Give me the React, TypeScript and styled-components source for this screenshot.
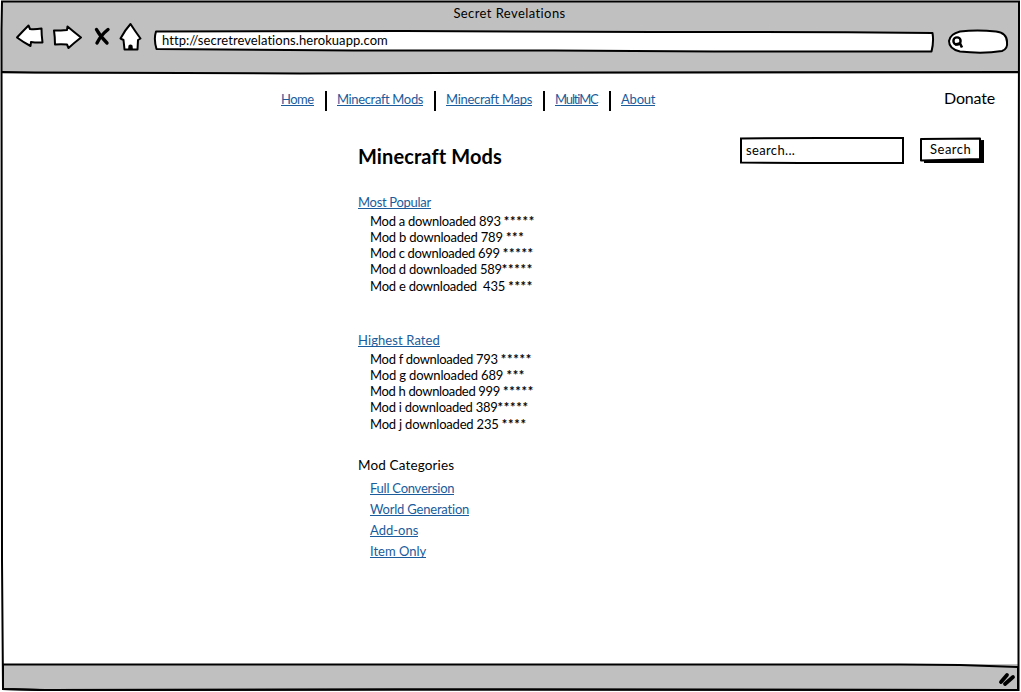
import React from "react";
import styled, { createGlobalStyle } from "styled-components";

const GlobalStyle = createGlobalStyle`
  * { box-sizing: border-box; }
  body { margin: 0; background: #fff; }
`;

const Window = styled.div`
  position: relative;
  display: flex;
  flex-direction: column;
  width: 1021px;
  height: 692px;
  overflow: hidden;
  background: #fff;
  color: #000;
  font-family: Lato, "Open Sans", sans-serif;
  font-size: 13px;
  font-variant-ligatures: none;
  line-height: 16px;
  white-space: pre;
`;

const FrameLines = styled.svg`
  position: absolute;
  inset: 0;
  pointer-events: none;
`;

const Chrome = styled.header`
  flex: none;
  height: 73px;
  margin: 1px 2px 0;
  padding-top: 4px;
  background: #c0c0c0;
`;

const Title = styled.div`
  height: 16px;
  padding-left: 15px;
  text-align: center;
  padding-right: 17px;
`;

const Toolbar = styled.div`
  display: flex;
  align-items: flex-start;
  padding-left: 13px;
`;

const ToolIcon = styled.svg<{ $gap: number }>`
  flex: none;
  display: block;
  margin-right: ${(p) => p.$gap}px;
`;

const Field = styled.div<{ $w: number; $h: number; $top?: number; $left?: number; $pad: number }>`
  position: relative;
  flex: none;
  display: flex;
  align-items: center;
  width: ${(p) => p.$w}px;
  height: ${(p) => p.$h}px;
  margin-top: ${(p) => p.$top ?? 0}px;
  margin-left: ${(p) => p.$left ?? 0}px;
  padding-left: ${(p) => p.$pad}px;
  padding-bottom: 2px;
`;

const Sketch = styled.svg`
  position: absolute;
  inset: 0;
  overflow: visible;
`;

const Label = styled.span<{ $ls?: number }>`
  position: relative;
  letter-spacing: ${(p) => p.$ls ?? 0}px;
`;

const Stars = styled.span`
  font-weight: 700;
  letter-spacing: 0.7px;
`;

const Link = styled.a<{ $ls?: number }>`
  display: block;
  width: fit-content;
  height: 14px;
  line-height: 15px;
  color: #1a5c9c;
  border-bottom: 1px solid #1a5c9c;
  letter-spacing: ${(p) => p.$ls ?? 0}px;
`;

const TopRow = styled.div`
  display: flex;
  justify-content: space-between;
  height: 39px;
  padding: 17px 26px 0 281px;
`;

const Nav = styled.nav`
  display: flex;
`;

const NavItem = styled.div<{ $w: number }>`
  width: ${(p) => p.$w}px;
  height: 20px;
  padding-top: 1px;
  & + & {
    border-left: 2px solid #000;
    padding-left: 10px;
  }
`;

const Donate = styled.div`
  width: 51px;
  font-size: 16px;
  line-height: 14px;
`;

const HeadRow = styled.div`
  display: flex;
  height: 82px;
  padding: 24px 0 0 358px;
`;

const Heading = styled.h1`
  margin: 8px 0 0;
  width: 382px;
  font-size: 20px;
  line-height: 22px;
  font-weight: 700;
  letter-spacing: 0.1px;
`;

const Section = styled.section<{ $h: number }>`
  height: ${(p) => p.$h}px;
  padding-left: 358px;
`;

const ModList = styled.ul`
  list-style: none;
  margin: 4px 0 0;
  padding: 0 0 0 12px;
  line-height: 16px;
  li:last-child {
    margin-top: 1px;
  }
`;

const SectionTitle = styled.div`
  height: 26px;
  line-height: 20px;
  font-size: 13.5px;
`;

const Categories = styled.div`
  display: flex;
  flex-direction: column;
  gap: 7px;
  padding-left: 12px;
`;

const StatusBar = styled.footer`
  flex: none;
  height: 27px;
  margin: auto 2px 1px;
  background: #c0c0c0;
`;

const nav: [string, number, number][] = [
  ["Home", 44, -0.5],
  ["Minecraft Mods", 109, -0.36],
  ["Minecraft Maps", 109, -0.3],
  ["MultiMC", 66, -1.15],
  ["About", 60, -0.2],
];

interface Mod {
  text: string;
  stars: string;
  ls: number;
}

const popular: Mod[] = [
  { text: "Mod a downloaded 893 ", stars: "*****", ls: -0.26 },
  { text: "Mod b downloaded 789 ", stars: "***", ls: -0.2 },
  { text: "Mod c downloaded 699 ", stars: "*****", ls: -0.3 },
  { text: "Mod d downloaded 589", stars: "*****", ls: -0.25 },
  { text: "Mod e downloaded  435 ", stars: "****", ls: -0.22 },
];

const rated: Mod[] = [
  { text: "Mod f downloaded 793 ", stars: "*****", ls: -0.3 },
  { text: "Mod g downloaded 689 ", stars: "***", ls: -0.15 },
  { text: "Mod h downloaded 999 ", stars: "*****", ls: -0.34 },
  { text: "Mod i downloaded 389", stars: "*****", ls: -0.25 },
  { text: "Mod j downloaded 235 ", stars: "****", ls: -0.2 },
];

const categories: [string, number][] = [
  ["Full Conversion", -0.25],
  ["World Generation", -0.2],
  ["Add-ons", 0],
  ["Item Only", 0],
];

const Mods = ({ items }: { items: Mod[] }) => (
  <ModList>
    {items.map(({ text, stars, ls }) => (
      <li key={text}>
        <Label $ls={ls}>{text}</Label>
        <Stars>{stars}</Stars>
      </li>
    ))}
  </ModList>
);

const ink = { fill: "#fff", stroke: "#000", strokeWidth: 2, strokeLinejoin: "round" as const, strokeLinecap: "round" as const };

export default function App() {
  return (
    <>
      <GlobalStyle />
      <Window>
        <Chrome>
          <Title><Label $ls={0.42}>Secret Revelations</Label></Title>
          <Toolbar>
            <ToolIcon $gap={8} width="30" height="32">
              <path {...ink} d="M2 16.5Q8 10 13.5 4.5L15 8Q20 8.500 26.500 7.500Q26.500 14 27.500 21.500Q21 21.800 16 21L15.500 25Q8 21 2 16.500Z" />
            </ToolIcon>
            <ToolIcon $gap={9} width="31" height="32">
              <path {...ink} d="M1 9.500Q8 9.500 14 9L14.500 5.500Q21 11 28 16.500Q21 22 15.500 27L14 23.500Q8 23 2 23.500Q2 16 1 9.500Z" />
            </ToolIcon>
            <ToolIcon $gap={8} width="18" height="32">
              <path d="M3.500 8.500Q7 15 14 22M15 8.500Q8 14 4 22" fill="none" stroke="#000" strokeWidth="3.400" strokeLinecap="round" />
            </ToolIcon>
            <ToolIcon $gap={11} width="24" height="32">
              <path {...ink} d="M11.500 3Q16 10 21.500 17.500L19 19L18.500 28.500L5.500 28.500L4.500 19L1.500 17.500Q6 9 11.500 3Z" />
              <path d="M9 29L9.500 24.500Q11.500 22.500 13.500 24.500L14 29Z" fill="#000" />
            </ToolIcon>
            <Field $w={780} $h={22} $top={9} $pad={8}>
              <Sketch width="780" height="22">
                <path {...ink} d="M2 1.500L250 1L500 2Q640 1.500 778.500 3Q780 12 777.500 21.500L560 21.500L400 20.500L200 20.500L2.500 19Q-.5 9 2 1.500Z" />
              </Sketch>
              <Label $ls={0.07}>http://secretrevelations.herokuapp.com</Label>
            </Field>
            <Field $w={60} $h={24} $top={8} $left={14} $pad={3}>
              <Sketch width="60" height="24">
                <path {...ink} d="M1 12Q2 5 12 2.500Q29 .5 48 2.500Q59 4 59 13Q60 20 54 22Q35 25 12 22.500Q1 20 1 12Z" />
                <circle cx="9" cy="12" r="3.600" fill="none" stroke="#000" strokeWidth="2.400" />
                <path d="M7 15.500L12 14.500L14 18.500" fill="none" stroke="#000" strokeWidth="2.600" />
              </Sketch>
            </Field>
          </Toolbar>
        </Chrome>

        <TopRow>
          <Nav>
            {nav.map(([text, w, ls]) => (
              <NavItem key={text} $w={w}><Link $ls={ls}>{text}</Link></NavItem>
            ))}
          </Nav>
          <Donate><Label $ls={-0.15}>Donate</Label></Donate>
        </TopRow>

        <HeadRow>
          <Heading>Minecraft Mods</Heading>
          <Field $w={164} $h={27} $pad={6}>
            <Sketch width="164" height="27">
              <path {...ink} strokeLinejoin="miter" d="M1 1.500L80 1L163 1L163 26L60 26L1 25.500Z" />
            </Sketch>
            <Label $ls={0.35}>search...</Label>
          </Field>
          <Field $w={65} $h={26} $left={16} $pad={10}>
            <Sketch width="65" height="26">
              <path d="M4 5L64 3L64 26L4 26Z" fill="#000" />
              <path {...ink} d="M1 2L60 1.500L60 22L1 23.500Z" />
            </Sketch>
            <Label $ls={0.5}>Search</Label>
          </Field>
        </HeadRow>

        <Section $h={138}>
          <Link $ls={-0.3}>Most Popular</Link>
          <Mods items={popular} />
        </Section>
        <Section $h={122}>
          <Link $ls={0.1}>Highest Rated</Link>
          <Mods items={rated} />
        </Section>
        <Section $h={120}>
          <SectionTitle><Label $ls={0.14}>Mod Categories</Label></SectionTitle>
          <Categories>
            {categories.map(([text, ls]) => <Link key={text} $ls={ls}>{text}</Link>)}
          </Categories>
        </Section>

        <StatusBar />
        <FrameLines width="1021" height="692" fill="none" stroke="#000" strokeWidth="2">
          <path d="M2 662L900 663.500L1019 667V692H2Z" fill="#fff" stroke="none" />
          <path d="M3 664.500L300 664.500L900 664.500L960 665L1018 667V690L400 689.500L40 690L3 689Z" fill="#c0c0c0" />
          <path d="M2 1.500L1019 1.500L1019 30L1018.500 300L1018.500 690L400 689.500L45 690L3 689L2 560L1.500 30Z" />
          <path d="M2 72L35 72.500L300 73.500L600 72.500L1018 72" />
          <path d="M1001 682L1007 675M1005 684L1013 677" strokeWidth="3.800" strokeLinecap="round" />
        </FrameLines>
      </Window>
    </>
  );
}
